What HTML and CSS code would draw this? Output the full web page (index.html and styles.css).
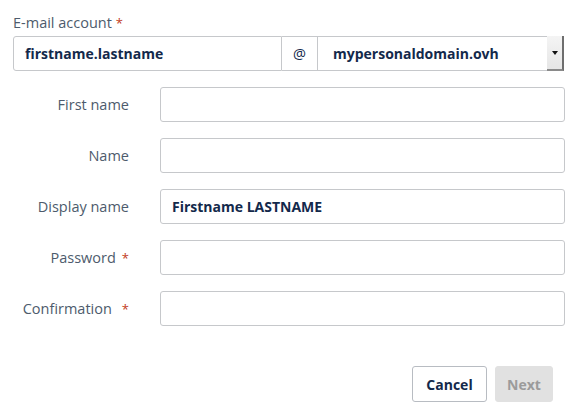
FILE: index.html
```html
<!DOCTYPE html>
<html>
<head>
<meta charset="utf-8">
<link rel="stylesheet" href="styles.css">
</head>
<body>
<div class="form">
  <div class="email-label">E-mail account <span class="req">*</span></div>
  <div class="email-group">
    <div class="field email-local">firstname.lastname</div>
    <div class="addon">@</div>
    <div class="select">
      <span class="select-text">mypersonaldomain.ovh</span>
      <span class="select-btn"><span class="arrow"></span></span>
    </div>
  </div>
  <div class="rows">
    <div class="label">First name</div>
    <div class="field input"></div>
    <div class="label">Name</div>
    <div class="field input"></div>
    <div class="label">Display name</div>
    <div class="field input">Firstname LASTNAME</div>
    <div class="label">Password<span class="req req-a">*</span></div>
    <div class="field input"></div>
    <div class="label">Confirmation<span class="req req-b">*</span></div>
    <div class="field input"></div>
  </div>
  <div class="actions">
    <button class="btn cancel">Cancel</button>
    <button class="btn next">Next</button>
  </div>
</div>
</body>
</html>
```
FILE: styles.css
```css
html, body {
  margin: 0;
  padding: 0;
  background: #ffffff;
}
body {
  font-family: "Open Sans", "Liberation Sans", sans-serif;
  font-size: 14px;
  color: #4d5b6c;
}
.form {
  width: 578px;
  padding-top: 13px;
}
.email-label {
  margin-left: 13px;
  line-height: 20px;
  height: 23px;
  font-size: 14.5px;
  color: #4d5b6c;
}
.req {
  color: #c23b22;
  font-weight: 400;
  font-size: 13px;
}
.req-a { margin-left: 6px; }
.req-b { margin-left: 10px; }
.email-group {
  margin-left: 13px;
  width: 551px;
  height: 35px;
  display: flex;
}
.field {
  box-sizing: border-box;
  border: 1px solid #c6c8cb;
  background: #fff;
  color: #13294b;
  font-weight: 700;
  font-size: 14px;
  display: flex;
  align-items: center;
  padding-left: 11px;
}
.email-local {
  width: 269px;
  height: 35px;
  border-radius: 3px 0 0 3px;
}
.addon {
  box-sizing: border-box;
  width: 36px;
  height: 35px;
  border: 1px solid #c6c8cb;
  border-left: none;
  display: flex;
  align-items: center;
  justify-content: center;
  color: #13294b;
  font-size: 14.5px;
}
.select {
  box-sizing: border-box;
  flex: 1;
  height: 35px;
  border: 1px solid #c6c8cb;
  border-left: none;
  display: flex;
  align-items: stretch;
  color: #13294b;
  font-weight: 700;
  font-size: 14px;
}
.select-text {
  flex: 1;
  display: flex;
  align-items: center;
  padding-left: 15px;
}
.select-btn {
  width: 15px;
  background: linear-gradient(#f4f4f4, #e6e6e6);
  border-right: 2px solid #6e6e6e;
  border-bottom: 2px solid #8a8a8a;
  margin: -1px -1px -1px 0;
  display: flex;
  align-items: center;
  justify-content: center;
}
.arrow {
  width: 0;
  height: 0;
  border-left: 3px solid transparent;
  border-right: 3px solid transparent;
  border-top: 4px solid #111;
}
.rows {
  margin-top: 16px;
  display: grid;
  grid-template-columns: 129px 405px;
  column-gap: 31px;
  row-gap: 16px;
}
.label {
  height: 35px;
  display: flex;
  align-items: center;
  justify-content: flex-end;
  font-size: 14.5px;
}
.input {
  height: 35px;
  border-radius: 3px;
}
.actions {
  margin-top: 40px;
  display: flex;
  justify-content: flex-end;
  gap: 8px;
  padding-right: 25px;
}
.btn {
  box-sizing: border-box;
  height: 36px;
  border-radius: 3px;
  font-family: "Open Sans", "Liberation Sans", sans-serif;
  font-weight: 700;
  font-size: 14px;
  padding: 0;
}
.cancel {
  width: 75px;
  background: #fff;
  border: 1px solid #b8bcc2;
  color: #13294b;
}
.next {
  width: 58px;
  background: #e1e1e1;
  border: 1px solid #e1e1e1;
  color: #9b9b9b;
}
```
